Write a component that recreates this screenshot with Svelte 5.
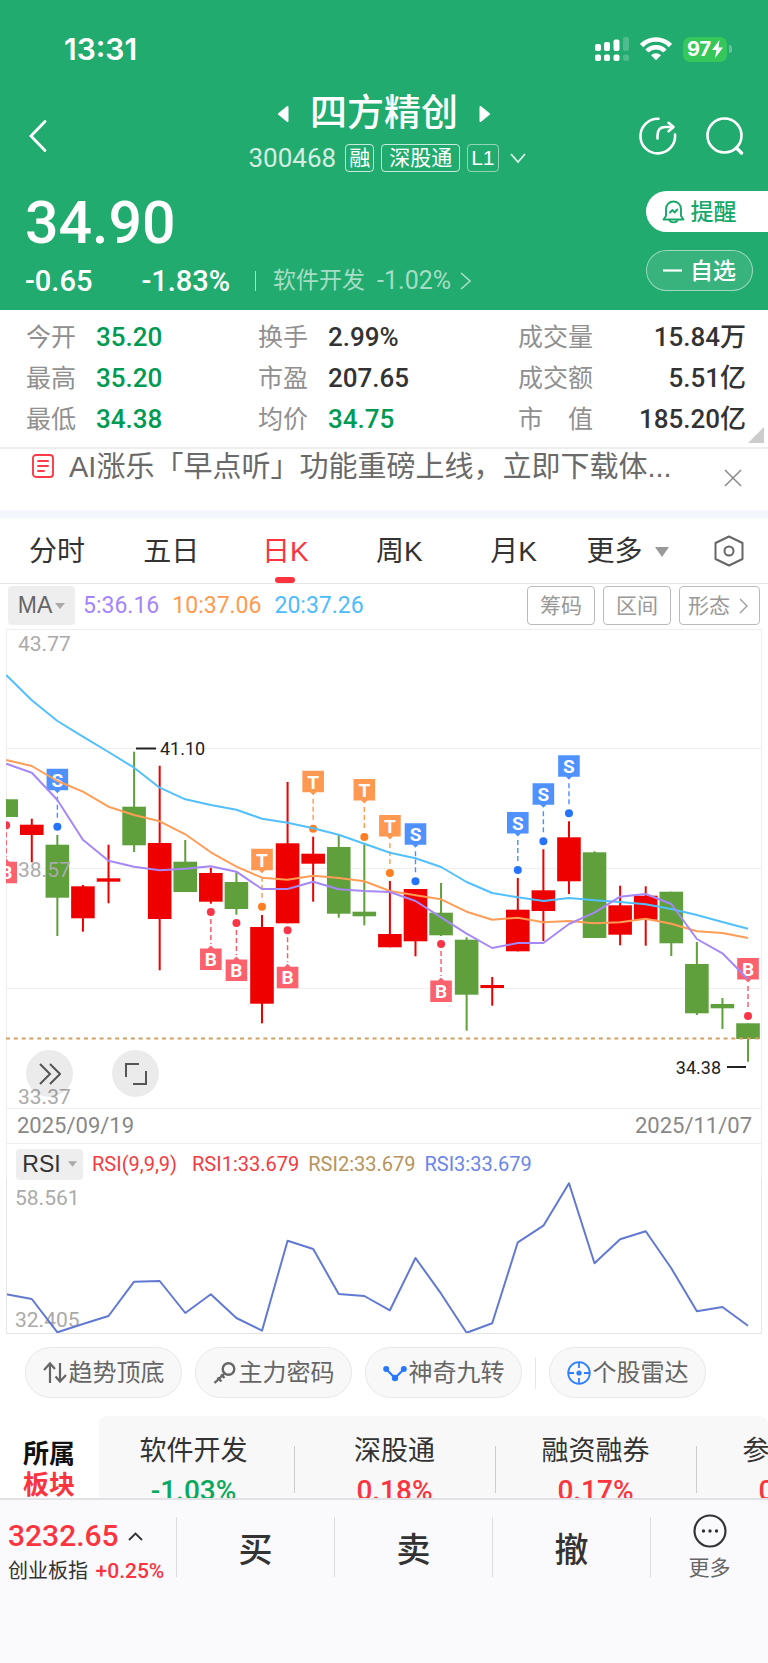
<script lang="ts">
	type Candle = { high: number; top: number; bottom: number; low: number; up: boolean };
	type Signal = { i: number; kind: 'S' | 'B' | 'T'; dot: number; below?: boolean };

	const X0 = 6.2;
	const STEP = 25.58;
	const BODY = 23.6;
	const cx = (i: number) => X0 + i * STEP;

	const quotes = [
		{ label: '今开', value: '35.20', tone: 'down' },
		{ label: '换手', value: '2.99%', tone: '' },
		{ label: '成交量', value: '15.84万', tone: '' },
		{ label: '最高', value: '35.20', tone: 'down' },
		{ label: '市盈', value: '207.65', tone: '' },
		{ label: '成交额', value: '5.51亿', tone: '' },
		{ label: '最低', value: '34.38', tone: 'down' },
		{ label: '均价', value: '34.75', tone: 'down' },
		{ label: '市　值', value: '185.20亿', tone: '' }
	];

	const tabs = ['分时', '五日', '日K', '周K', '月K'];
	let activeTab = $state('日K');

	const sectors = [
		{ name: '软件开发', change: '-1.03%' },
		{ name: '深股通', change: '0.18%' },
		{ name: '融资融券', change: '0.17%' },
		{ name: '参股券商', change: '0.21%' }
	];

	const c = (high: number, top: number, bottom: number, low: number, up: boolean): Candle => ({
		high,
		top,
		bottom,
		low,
		up
	});

	/* y values are measured down from the top of the price pane */
	const candles: Candle[] = [
		c(170.3, 170.3, 188, 188, false),
		c(189.7, 195.7, 206, 233.3, true),
		c(206, 215.7, 268.7, 307, false),
		c(256, 257.3, 289.3, 302.7, true),
		c(215.7, 249.3, 252.7, 274.3, true),
		c(122.7, 177.7, 216.3, 223, false),
		c(136.7, 214, 290, 341.3, true),
		c(211, 232.7, 263, 263, false),
		c(238.7, 244, 272.7, 274.7, true),
		c(243.3, 253, 280, 285.7, false),
		c(286, 298, 374.7, 394.3, true),
		c(153, 214.3, 294.3, 294.3, true),
		c(207.7, 224.7, 234.7, 272.7, true),
		c(205.7, 218, 284.7, 288.7, false),
		c(215.3, 282.7, 287.3, 296.3, false),
		c(252, 305, 318.3, 318.3, true),
		c(260, 260, 312.3, 327.3, true),
		c(254, 283.7, 306.3, 307, false),
		c(308.3, 310.7, 365.7, 401.7, false),
		c(348, 356, 359, 376.7, true),
		c(249, 280.7, 322.3, 322.3, true),
		c(220.3, 261.3, 282, 312, true),
		c(192.3, 208.3, 252.3, 265, true),
		c(222.3, 223.3, 309, 309, false),
		c(256.7, 276.3, 305.7, 316.3, true),
		c(257.3, 266.7, 290.7, 316.7, true),
		c(262.7, 262.7, 314.3, 327, false),
		c(313, 335, 384.3, 386, false),
		c(369, 375, 379.3, 400, false),
		c(394.3, 394.3, 410, 432.7, false)
	];

	const ma5 = [
		134.7, 143.7, 171, 210.7, 231.7, 237.7, 241.3, 239.7, 237.3, 242.7, 260, 260, 252.7, 260.3, 262,
		263, 272, 288.3, 304.7, 319, 314, 314, 295, 283.7, 267.7, 265, 275, 310, 324.3, 350.3
	];
	const ma10 = [
		131, 137, 152, 162.7, 177.7, 186, 192.3, 205.3, 223.3, 237.7, 248.7, 250.7, 246.7, 249, 252.3,
		262, 266.3, 270.3, 282.7, 290.7, 288.7, 293.3, 292, 294.3, 293.3, 289.7, 294.7, 302.3, 304, 309
	];
	const ma20 = [
		46, 71.3, 92, 107.7, 123, 138.7, 158.7, 170.3, 176, 180.7, 189.7, 193.7, 199.3, 205.7, 214.7,
		223.7, 229.3, 238, 253, 264, 268.3, 272, 269, 271.3, 273, 275.3, 280, 286, 293, 299.7
	];
	const rsi = [
		114.3, 119, 152.3, 144, 136, 101.7, 101, 133, 114.3, 138, 150.7, 60.7, 69, 114, 116, 130.3, 78,
		113.7, 152.7, 143.3, 62.3, 45.7, 3.3, 83.3, 59.3, 51.3, 88.3, 131.3, 127, 145.7
	];

	const signals: Signal[] = [
		{ i: 0, kind: 'B', dot: 196.3, below: true },
		{ i: 2, kind: 'S', dot: 197.7 },
		{ i: 8, kind: 'B', dot: 283, below: true },
		{ i: 9, kind: 'B', dot: 294, below: true },
		{ i: 10, kind: 'T', dot: 277.7 },
		{ i: 11, kind: 'B', dot: 301.3, below: true },
		{ i: 12, kind: 'T', dot: 199.7 },
		{ i: 14, kind: 'T', dot: 208 },
		{ i: 15, kind: 'T', dot: 244 },
		{ i: 16, kind: 'S', dot: 252.3 },
		{ i: 17, kind: 'B', dot: 315, below: true },
		{ i: 20, kind: 'S', dot: 241 },
		{ i: 21, kind: 'S', dot: 212.3 },
		{ i: 22, kind: 'S', dot: 184.3 },
		{ i: 29, kind: 'B', dot: 387 }
	];

	const line = (ys: number[]) => ys.map((y, i) => `${cx(i).toFixed(1)},${y}`).join(' ');

	function flag(s: Signal): string {
		const x = cx(s.i);
		if (s.below) {
			const y = s.dot + 36.5;
			return `M${x - 10.8} ${y}h7.8l3 -3l3 3h7.8v21.5h-21.6z`;
		}
		const y = s.dot - 58;
		return `M${x - 10.8} ${y}h21.6v21.5h-7.8l-3 3l-3 -3h-7.8z`;
	}
</script>

<div class="page">
	<header class="hero">
		<div class="status">
			<time class="status__time">13:31</time>
			<div class="status__icons">
				<svg width="34" height="24" viewBox="0 0 34 24" fill="#fff" aria-hidden="true">
					<rect x="0" y="7" width="6" height="7" rx="2" />
					<rect x="9" y="5" width="6" height="9" rx="2" />
					<rect x="18.500" y="2.500" width="6" height="11.500" rx="2" />
					<rect x="0" y="17.500" width="6" height="6.500" rx="2" />
					<rect x="9" y="17.500" width="6" height="6.500" rx="2" />
					<rect x="18.500" y="17.500" width="6" height="6.500" rx="2" />
					<g opacity=".2">
						<rect x="28" y="0" width="6" height="14" rx="2" />
						<rect x="28" y="17.500" width="6" height="6.500" rx="2" />
					</g>
				</svg>
				<svg width="32" height="24" viewBox="0 0 32 24" aria-hidden="true">
					<g fill="none" stroke="#fff" stroke-width="4.600">
						<path d="M1.600 8.500a20.400 20.400 0 0 1 28.800 0" />
						<path d="M7 14a12.700 12.700 0 0 1 18 0" />
					</g>
					<path d="M11 18.300a7 7 0 0 1 10 0l-5 5z" fill="#fff" />
				</svg>
				<span class="battery">
					<span class="battery__cell"
						>97<svg width="11" height="18" viewBox="0 0 11 18" aria-hidden="true"
							><path d="M7.500 0L0 10h4.500L3 18l8-10.500H6.500z" fill="#fff" /></svg
						></span
					>
				</span>
			</div>
		</div>

		<div class="nav">
			<button class="icon-btn nav__back" aria-label="返回">
				<svg width="18" height="34" viewBox="0 0 18 34" aria-hidden="true">
					<path d="M16 2.500L2 17l14 14.500" fill="none" stroke="#fff" stroke-width="2.800" stroke-linecap="round" />
				</svg>
			</button>
			<div class="nav__title">
				<div class="nav__name">
					<button class="icon-btn" aria-label="上一只">
						<svg width="13" height="18" viewBox="0 0 13 18" aria-hidden="true">
							<path d="M10.500 2L2 9l8.500 7z" fill="#fff" stroke="#fff" stroke-width="2" stroke-linejoin="round" />
						</svg>
					</button>
					<h1>四方精创</h1>
					<button class="icon-btn" aria-label="下一只">
						<svg width="13" height="18" viewBox="0 0 13 18" aria-hidden="true">
							<path d="M2.500 2L11 9l-8.500 7z" fill="#fff" stroke="#fff" stroke-width="2" stroke-linejoin="round" />
						</svg>
					</button>
				</div>
				<div class="nav__meta">
					<span class="nav__code">300468</span>
					<span class="tag">融</span>
					<span class="tag tag--wide">深股通</span>
					<span class="tag tag--dim">L1</span>
					<svg class="nav__more" width="16" height="10" viewBox="0 0 16 10" aria-hidden="true">
						<path d="M1 1l7 8 7-8" fill="none" stroke="#fff" stroke-width="1.800" opacity=".85" />
					</svg>
				</div>
			</div>
			<div class="nav__actions">
				<button class="icon-btn" aria-label="分享">
					<svg width="38" height="38" viewBox="0 0 38 38" fill="none" stroke="#fff" stroke-width="2.600" stroke-linecap="round" stroke-linejoin="round" aria-hidden="true">
						<path d="M19.500 1.800A17.300 17.300 0 1 0 36 17.500" />
						<path d="M18.500 21.500v-3q0-8.500 8-8.500h7.500" />
						<path d="M29.500 5.800l5 4.200-5 4.200" />
					</svg>
				</button>
				<button class="icon-btn" aria-label="搜索">
					<svg width="38" height="38" viewBox="0 0 38 38" fill="none" stroke="#fff" stroke-linecap="round" aria-hidden="true">
						<circle cx="18.500" cy="18.500" r="17" stroke-width="2.600" />
						<path d="M30.500 31l5 5" stroke-width="3.400" />
					</svg>
				</button>
			</div>
		</div>

		<div class="quote">
			<div class="quote__main">
				<strong class="quote__price">34.90</strong>
				<div class="quote__row">
					<span class="quote__diff">-0.65</span>
					<span class="quote__pct">-1.83%</span>
					<a class="quote__sector" href="#sector">
						软件开发
						<span>-1.02%</span>
						<svg width="11" height="18" viewBox="0 0 11 18" aria-hidden="true">
							<path d="M1 1l9 8-9 8" fill="none" stroke="currentColor" stroke-width="1.600" />
						</svg>
					</a>
				</div>
			</div>
			<div class="quote__side">
				<button class="chip chip--solid">
					<svg width="23" height="24" viewBox="0 0 23 24" fill="none" stroke="currentColor" stroke-width="1.900" stroke-linecap="round" stroke-linejoin="round" aria-hidden="true">
						<path d="M1.500 19.500h20l-2.500-3.500V9a7.500 7.500 0 0 0-15 0v7z" />
						<path d="M7.500 20.500a4.300 3 0 0 0 8 0" />
						<path d="M8 12.500l2.500-2.500 2 2.500 2.800-3" />
					</svg>
					提醒
				</button>
				<button class="chip chip--ghost">
					<svg width="19" height="3" viewBox="0 0 19 3" aria-hidden="true"><path d="M0 1.500h19" stroke="#fff" stroke-width="2.200" /></svg>
					自选
				</button>
			</div>
		</div>
	</header>

	<main class="content">
		<dl class="stats">
			{#each quotes as q}
				<div class="stats__item">
					<dt>{q.label}</dt>
					<dd class:down={q.tone === 'down'}>{q.value}</dd>
				</div>
			{/each}
			<svg class="stats__corner" width="16" height="16" viewBox="0 0 16 16" aria-hidden="true">
				<path d="M16 0v16H0z" fill="#ccc" />
			</svg>
		</dl>

		<div class="notice">
			<svg width="22" height="24" viewBox="0 0 22 24" fill="none" stroke="#fb3b48" stroke-width="1.900" aria-hidden="true">
				<rect x="1" y="1" width="20" height="22" rx="3" />
				<path d="M6 7h10M6 12h10M6 17h6" stroke-linecap="round" />
			</svg>
			<a class="notice__text" href="#notice">AI涨乐「早点听」功能重磅上线，立即下载体...</a>
			<button class="icon-btn notice__close" aria-label="关闭">
				<svg width="18" height="18" viewBox="0 0 18 18" aria-hidden="true">
					<path d="M1 1l16 16M17 1L1 17" stroke="#888" stroke-width="1.500" />
				</svg>
			</button>
		</div>

		<nav class="tabs">
			{#each tabs as t}
				<button class="tab" class:tab--on={t === activeTab} onclick={() => (activeTab = t)}>{t}</button>
			{/each}
			<button class="tab tab--more">
				更多
				<svg width="14" height="10" viewBox="0 0 14 10" aria-hidden="true"><path d="M0 0h14L7 10z" fill="#999" /></svg>
			</button>
			<button class="icon-btn tabs__settings" aria-label="设置">
				<svg width="30" height="32" viewBox="0 0 30 32" fill="none" stroke="#666" stroke-width="2" stroke-linejoin="round" aria-hidden="true">
					<path d="M15 1.500L28.500 8v16L15 30.500 1.500 24V8z" />
					<circle cx="15" cy="16" r="4.500" />
				</svg>
			</button>
		</nav>

		<div class="ma">
			<button class="picker">
				MA
				<svg width="10" height="6" viewBox="0 0 10 6" aria-hidden="true"><path d="M0 0h10L5 6z" fill="#aaa" /></svg>
			</button>
			<div class="ma__values">
				<span class="c-purple">5:36.16</span>
				<span class="c-orange">10:37.06</span>
				<span class="c-blue">20:37.26</span>
			</div>
			<button class="tool">筹码</button>
			<button class="tool">区间</button>
			<button class="tool">
				形态
				<svg width="9" height="16" viewBox="0 0 9 16" aria-hidden="true"><path d="M1 1l7 7-7 7" fill="none" stroke="#999" stroke-width="1.300" /></svg>
			</button>
		</div>

		<div class="chart">
			<svg class="plot" viewBox="0 0 768 480" role="img" aria-label="日K线">
				<clipPath id="pane"><rect x="6" y="0" width="755" height="480" /></clipPath>
				<g stroke="#eee" stroke-width="1">
					<path d="M6.500 .5H761.500M6.500 119.500H761.500M6.500 239.500H761.500M6.500 359.500H761.500M6.500 479.500H761.500" />
					<path d="M6.500 0V480M761.500 0V480" />
				</g>
				<g clip-path="url(#pane)">
					{#each candles as k, i}
						<g fill={k.up ? '#ee0000' : '#5f9f3c'}>
							<rect x={cx(i) - 1} y={k.high} width="2" height={k.low - k.high} />
							<rect x={cx(i) - BODY / 2} y={k.top} width={BODY} height={k.bottom - k.top} />
						</g>
					{/each}

					{#each signals as s}
						<g class="signal signal--{s.kind}">
							<path d={flag(s)} class="signal__flag" />
							<text x={cx(s.i)} y={s.below ? s.dot + 54 : s.dot - 40} text-anchor="middle">{s.kind}</text>
							<line x1={cx(s.i)} x2={cx(s.i)} y1={s.below ? s.dot + 7 : s.dot - 30} y2={s.below ? s.dot + 32 : s.dot - 6} />
							<circle cx={cx(s.i)} cy={s.dot} r="4" />
						</g>
					{/each}

					<g fill="none" stroke-width="2" stroke-linejoin="round">
						<polyline points={line(ma20)} stroke="#52bfff" />
						<polyline points={line(ma10)} stroke="#ff9d57" />
						<polyline points={line(ma5)} stroke="#a588f5" />
					</g>
					<path d="M6 409.500H761" stroke="#cfa063" stroke-width="2" stroke-dasharray="4 3.800" />
				</g>

				<g class="axis">
					<text x="18" y="22">43.77</text>
					<text x="18" y="248">38.57</text>
					<text x="18" y="475">33.37</text>
				</g>
				<g class="extreme">
					<path d="M136 119.500h20M727 438h19" stroke="#222" stroke-width="2" />
					<text x="160" y="126">41.10</text>
					<text x="721" y="445" text-anchor="end">34.38</text>
				</g>
			</svg>
			<div class="chart__tools">
				<button class="round" aria-label="前进">
					<svg width="22" height="22" viewBox="0 0 22 22" fill="none" stroke="#555" stroke-width="2" aria-hidden="true">
						<path d="M1 1l10 10L1 21M11 1l10 10-10 10" />
					</svg>
				</button>
				<button class="round" aria-label="全屏">
					<svg width="22" height="22" viewBox="0 0 22 22" fill="none" stroke="#555" stroke-width="2" aria-hidden="true">
						<path d="M14 1H1v13M8 21h13V8" />
					</svg>
				</button>
			</div>
		</div>

		<div class="dates">
			<time>2025/09/19</time>
			<time>2025/11/07</time>
		</div>

		<div class="rsi">
			<div class="rsi__head">
				<button class="picker picker--small">
					RSI
					<svg width="9" height="6" viewBox="0 0 10 6" aria-hidden="true"><path d="M0 0h10L5 6z" fill="#aaa" /></svg>
				</button>
				<span class="c-red rsi__params">RSI(9,9,9)</span>
				<span class="c-red">RSI1:33.679</span>
				<span class="c-gold">RSI2:33.679</span>
				<span class="c-indigo">RSI3:33.679</span>
			</div>
			<svg class="plot" viewBox="0 0 768 154" role="img" aria-label="RSI">
				<g class="axis">
					<text x="15" y="25">58.561</text>
					<text x="15" y="147">32.405</text>
				</g>
				<polyline points={line(rsi)} fill="none" stroke="#6279d2" stroke-width="2" stroke-linejoin="round" />
				<path d="M6.500 0V153.500H761.500V0" fill="none" stroke="#e4e4e4" />
			</svg>
		</div>

		<div class="features">
			<button class="feature">
				<svg width="24" height="24" viewBox="0 0 24 24" fill="none" stroke="#666" stroke-width="2.200" aria-hidden="true">
					<path d="M7 22V3M1 9l6-6.500L12 8M17 2v18.500M23 14l-6 6.500-4.500-5" />
				</svg>
				趋势顶底
			</button>
			<button class="feature">
				<svg width="24" height="24" viewBox="0 0 24 24" fill="none" stroke="#666" stroke-width="2.400" aria-hidden="true">
					<circle cx="15.500" cy="8" r="5.800" />
					<path d="M11.500 12.500L1.500 22M4.500 16.500l4 4M8 13.500l3.500 3.500" />
				</svg>
				主力密码
			</button>
			<button class="feature">
				<svg width="24" height="24" viewBox="0 0 24 24" aria-hidden="true">
					<path d="M3 8l9 9 9-9" fill="none" stroke="#2878ff" stroke-width="2.200" />
					<g fill="#2878ff"><circle cx="3.200" cy="8" r="3" /><circle cx="12" cy="17" r="3.200" /><circle cx="20.800" cy="8" r="3" /></g>
				</svg>
				神奇九转
			</button>
			<span class="features__rule"></span>
			<button class="feature">
				<svg width="24" height="24" viewBox="0 0 24 24" fill="none" stroke="#2f80ff" stroke-width="1.800" aria-hidden="true">
					<circle cx="12" cy="12" r="10.800" />
					<path d="M12 1v6M12 17v6M1 12h6M17 12h6" />
					<circle cx="12" cy="12" r="2.600" fill="#2f80ff" stroke="none" />
				</svg>
				个股雷达
			</button>
		</div>

		<section class="sectors" id="sector">
			<h2>所属<br /><em>板块</em></h2>
			<div class="sectors__panel">
				<ul>
					{#each sectors as s}
						<li>
							<span>{s.name}</span>
							<b class:fall={s.change.startsWith('-')}>{s.change}</b>
						</li>
					{/each}
				</ul>
			</div>
		</section>
	</main>

	<footer class="bar">
		<button class="bar__index">
			<span class="bar__point">
				3232.65
				<svg width="15" height="9" viewBox="0 0 15 9" aria-hidden="true"><path d="M1 8l6.500-6.500L14 8" fill="none" stroke="#333" stroke-width="1.800" /></svg>
			</span>
			<span class="bar__name">创业板指 <i>+0.25%</i></span>
		</button>
		<button class="bar__trade">买</button>
		<button class="bar__trade">卖</button>
		<button class="bar__trade">撤</button>
		<button class="bar__more">
			<svg width="34" height="34" viewBox="0 0 34 34" aria-hidden="true">
				<circle cx="17" cy="17" r="15.500" fill="none" stroke="#333" stroke-width="2.200" />
				<g fill="#333"><circle cx="10.500" cy="17" r="1.700" /><circle cx="17" cy="17" r="1.700" /><circle cx="23.500" cy="17" r="1.700" /></g>
			</svg>
			更多
		</button>
	</footer>
</div>

<style>
	:global(body) {
		background: #fff;
	}

	.page {
		--num: Roboto, 'Noto Sans CJK SC', sans-serif;
		display: flex;
		flex-direction: column;
		height: 100vh;
		color: #333;
		font-family: 'Liberation Sans', 'Noto Sans CJK SC', sans-serif;
	}

	.page * {
		box-sizing: border-box;
	}

	button {
		display: flex;
		align-items: center;
		justify-content: center;
		margin: 0;
		padding: 0;
		border: 0;
		background: none;
		color: inherit;
		font: inherit;
		white-space: nowrap;
	}

	a {
		color: inherit;
		text-decoration: none;
	}

	svg {
		display: block;
		flex: none;
	}

	/* header */
	.hero {
		flex: none;
		background: #22ab6f;
		color: #fff;
	}

	.status {
		display: flex;
		align-items: center;
		justify-content: space-between;
		padding: 31px 36px 23px 64px;
	}

	.status__time {
		font: 600 30px/36px Inter, sans-serif;
	}

	.status__icons {
		display: flex;
		align-items: center;
		gap: 11px;
	}

	.battery {
		display: flex;
		align-items: center;
		gap: 2px;
	}

	.battery::after {
		content: '';
		width: 3px;
		height: 8px;
		border-radius: 0 3px 3px 0;
		background: rgb(255 255 255 / 0.3);
	}

	.battery__cell {
		display: flex;
		align-items: center;
		justify-content: center;
		gap: 1px;
		width: 44px;
		height: 25px;
		border-radius: 7px;
		background: #35c759;
		font: 700 20px/25px Inter, sans-serif;
	}

	.nav {
		display: grid;
		grid-template-columns: 1fr auto 1fr;
		align-items: center;
		padding: 0 24px;
	}

	.nav__back {
		justify-self: start;
		padding: 10px 0 0 5px;
	}

	.nav__title {
		display: flex;
		flex-direction: column;
		align-items: center;
		gap: 6px;
	}

	.nav__name {
		display: flex;
		align-items: center;
		gap: 20px;
	}

	h1 {
		margin: 0;
		font-size: 37px;
		font-weight: 500;
		line-height: 48px;
	}

	.nav__meta {
		display: flex;
		align-items: center;
		gap: 7px;
		padding-left: 6px;
	}

	.nav__code {
		margin-right: 2px;
		font: 400 26px/28px var(--num);
		opacity: 0.8;
	}

	.nav__more {
		margin-left: 4px;
	}

	.tag {
		padding: 0 3px;
		border: 1px solid rgb(255 255 255 / 0.75);
		border-radius: 4px;
		font-size: 21px;
		line-height: 26px;
	}

	.tag--wide {
		padding: 0 7px;
	}

	.tag--dim {
		border-color: rgb(255 255 255 / 0.5);
	}

	.nav__actions {
		display: flex;
		gap: 29px;
		justify-self: end;
		padding-top: 10px;
	}

	.quote {
		display: flex;
		justify-content: space-between;
		padding: 19px 0 13px 25px;
	}

	.quote__main {
		display: flex;
		flex-direction: column;
		gap: 10px;
	}

	.quote__price {
		font: 500 59px/64px var(--num);
	}

	.quote__row {
		display: flex;
		align-items: center;
		font: 500 29px/32px var(--num);
	}

	.quote__pct {
		margin-left: 49px;
	}

	.quote__sector {
		display: flex;
		align-items: center;
		gap: 12px;
		margin-left: 25px;
		font-size: 23px;
		font-weight: 400;
		color: rgb(255 255 255 / 0.6);
	}

	.quote__sector::before {
		content: '';
		width: 1px;
		height: 20px;
		margin-right: 5px;
		background: currentColor;
	}

	.quote__sector span {
		font-size: 25px;
	}

	.quote__sector svg {
		margin-left: -3px;
	}

	.quote__side {
		display: flex;
		flex-direction: column;
		gap: 18px;
		width: 122px;
	}

	.chip {
		height: 41px;
		gap: 6px;
		font-size: 23px;
		font-weight: 500;
		line-height: 38px;
	}

	.chip--solid {
		padding-right: 16px;
		border-radius: 21px 0 0 21px;
		background: #fff;
		color: #17a868;
	}

	.chip--ghost {
		gap: 8px;
		width: 107px;
		border: 1px solid rgb(255 255 255 / 0.5);
		border-radius: 21px;
		background: rgb(255 255 255 / 0.1);
	}

	/* scroll area */
	.content {
		flex: 1;
		min-height: 0;
		overflow: hidden auto;
		scrollbar-width: none;
	}

	.stats {
		position: relative;
		display: grid;
		grid-template-columns: 232fr 260fr 228fr;
		margin: 0;
		padding: 7px 22px 7px 26px;
		border-bottom: 2px solid #eee;
	}

	.stats__item {
		display: flex;
		gap: 20px;
		line-height: 41px;
	}

	.stats__item:nth-child(3n) {
		justify-content: space-between;
	}

	dt {
		color: #909090;
		font-size: 25px;
	}

	dd {
		margin: 0;
		font-family: var(--num);
		font-size: 26px;
		font-weight: 500;
	}

	.down {
		color: #009a52;
	}

	.stats__corner {
		position: absolute;
		right: 4px;
		bottom: 4px;
	}

	.notice {
		display: flex;
		align-items: flex-start;
		padding: 5px 26px 18px 32px;
		border-bottom: 8px solid #f3f6fa;
	}

	.notice__text {
		flex: 1;
		margin-left: 15px;
		overflow: hidden;
		color: #6a6a6a;
		font-size: 29px;
		line-height: 38px;
		margin-top: -6px;
		padding-bottom: 6px;
		white-space: nowrap;
	}

	.notice__close {
		padding-top: 15px;
	}

	.tabs {
		display: flex;
		border-bottom: 1px solid #e6e6e6;
	}

	.tab {
		flex: 115;
		gap: 12px;
		padding-bottom: 6px;
		border-top: 8px solid transparent;
		font-size: 28px;
		line-height: 51px;
	}

	.tab--more {
		padding-right: 6px;
	}

	.tab--on {
		flex-direction: column;
		gap: 0;
		padding: 0;
		color: #fb3440;
	}

	.tab--on::after {
		content: '';
		width: 20px;
		height: 6px;
		border-radius: 3px;
		background: #fb3440;
	}

	.tabs__settings {
		flex: 78;
	}

	.ma {
		display: flex;
		align-items: center;
		gap: 8px;
		padding: 2px 8px 4px;
	}

	.picker {
		gap: 3px;
		width: 67px;
		height: 39px;
		border-radius: 4px;
		background: #eee;
		color: #666;
		font-size: 23px;
	}

	.ma__values {
		display: flex;
		flex: 1;
		gap: 13px;
		font: 400 23px/28px var(--num);
	}

	.c-purple {
		color: #a585f8;
	}

	.c-orange {
		color: #ff9a4f;
	}

	.c-blue {
		color: #4cbcff;
	}

	.c-red {
		color: #f23c42;
	}

	.c-gold {
		color: #b8935a;
	}

	.c-indigo {
		color: #6b86e6;
	}

	.tool {
		gap: 9px;
		height: 39px;
		padding: 0 12px;
		border: 1px solid #bbb;
		border-radius: 4px;
		color: #999;
		font-size: 21px;
		line-height: 37px;
	}

	.tool:last-child {
		padding: 0 11px 0 8px;
	}

	.chart {
		position: relative;
	}

	.plot {
		width: 100%;
		font-family: Roboto, sans-serif;
	}

	.axis {
		fill: #aaa;
		font-size: 21px;
	}

	.extreme {
		fill: #222;
		font-size: 18px;
	}

	.signal text {
		fill: #fff;
		font-size: 19px;
		font-weight: 700;
	}

	.signal line {
		stroke-width: 1.4;
		stroke-dasharray: 5 3;
	}

	.signal--S {
		fill: #2673ff;
		stroke: none;
	}

	.signal--S line {
		stroke: #4d8dff;
	}

	.signal--S .signal__flag {
		fill: #4f92ff;
	}

	.signal--B {
		fill: #fb3548;
	}

	.signal--B line {
		stroke: #fb5563;
	}

	.signal--B .signal__flag {
		fill: #fb626d;
	}

	.signal--T {
		fill: #ff7e22;
	}

	.signal--T line {
		stroke: #ff9850;
	}

	.signal--T .signal__flag {
		fill: #ff9850;
	}

	.chart__tools {
		position: absolute;
		bottom: 12px;
		left: 26px;
		display: flex;
		gap: 39px;
	}

	.round {
		width: 47px;
		height: 47px;
		border-radius: 50%;
		background: rgb(0 0 0 / 0.08);
	}

	.dates {
		display: flex;
		justify-content: space-between;
		margin: 0 6px;
		padding: 3px 9px 3px 10px;
		border: solid #eee;
		border-width: 0 1px 1px;
		color: #888;
		font: 400 22px/28px var(--num);
	}

	.rsi__head {
		display: flex;
		align-items: center;
		gap: 9px;
		margin: 0 6px;
		padding: 4px 9px 0;
		border: solid #eee;
		border-width: 0 1px;
		font: 400 20px/32px var(--num);
	}

	.rsi__params {
		margin-right: 6px;
	}

	.picker--small {
		gap: 7px;
		height: 31px;
		color: #333;
		font-family: 'Liberation Sans', sans-serif;
	}

	.features {
		display: flex;
		align-items: center;
		gap: 13px;
		padding: 13px 25px 18px;
	}

	.feature {
		flex: none;
		gap: 2px;
		width: 157px;
		height: 51px;
		border: 1px solid #e8e8e8;
		border-radius: 26px;
		background: #f8f8f8;
		color: #666;
		font-size: 24px;
		line-height: 49px;
	}

	.features__rule {
		width: 1px;
		height: 32px;
		background: #e6e6e6;
	}

	.sectors {
		display: flex;
	}

	h2 {
		flex: none;
		width: 99px;
		margin: 0;
		padding: 23px 0 0 23px;
		color: #111;
		font-size: 26px;
		font-weight: 700;
		line-height: 31px;
	}

	h2 em {
		color: #fb3440;
		font-style: normal;
	}

	.sectors__panel {
		flex: 1;
		min-width: 0;
		overflow: hidden;
		border-radius: 8px;
		background: #f8f8f8;
	}

	ul {
		display: flex;
		margin: 0 0 0 -6px;
		padding: 16px 0;
		list-style: none;
	}

	li {
		position: relative;
		display: flex;
		flex: none;
		flex-direction: column;
		align-items: center;
		width: 201px;
		font-size: 27px;
		line-height: 38px;
	}

	li:not(:first-child)::before {
		content: '';
		position: absolute;
		top: 14px;
		left: 0;
		width: 1px;
		height: 47px;
		background: #ccc;
	}

	li b {
		color: #fb3440;
		font: 500 28px/42px var(--num);
	}

	li .fall {
		color: #0aa95f;
	}

	/* trade bar */
	.bar {
		display: grid;
		flex: none;
		grid-template-columns: 176fr 158fr 158fr 158fr 118fr;
		align-items: start;
		padding: 17px 0 76px;
		border-top: 2px solid #e2e2e6;
		background: #fafafc;
	}

	.bar__index {
		flex-direction: column;
		align-items: flex-start;
		padding-left: 8px;
	}

	.bar__point {
		display: flex;
		align-items: center;
		gap: 9px;
		color: #fb3440;
		font: 500 30px/38px var(--num);
	}

	.bar__name {
		font-size: 20px;
		line-height: 32px;
	}

	.bar__name i {
		margin-left: 2px;
		color: #fb3440;
		font: 500 21px/32px var(--num);
	}

	.bar__trade {
		height: 60px;
		border-left: 1px solid #ddd;
		font-size: 34px;
		font-weight: 500;
	}

	.bar__more {
		flex-direction: column;
		height: 60px;
		border-left: 1px solid #ddd;
		gap: 7px;
		color: #666;
		font-size: 21px;
		line-height: 26px;
	}
</style>
